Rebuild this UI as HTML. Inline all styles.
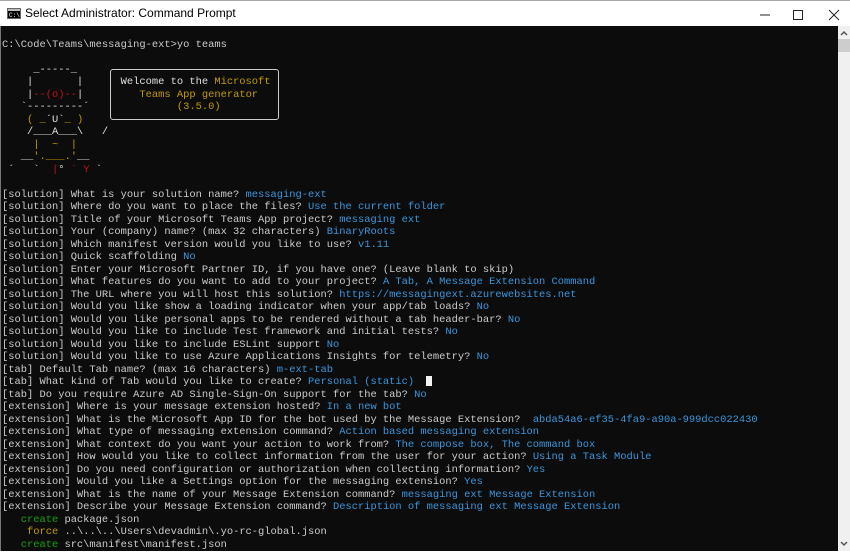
<!DOCTYPE html>
<html><head><meta charset="utf-8"><style>
*{margin:0;padding:0}
body{width:850px;height:551px;overflow:hidden;background:#fff;position:relative;font-family:"Liberation Mono",monospace}
.tb{position:absolute;left:0;top:0;width:850px;height:26px;background:#fff;border-top:1px solid #aaa;box-sizing:border-box}
.tt{position:absolute;left:25px;top:5px;font:12px "Liberation Sans",sans-serif;color:#000}
.con{position:absolute;left:0;top:26px;width:838px;height:525px;background:#0c0c0c;border-left:1px solid #777;box-sizing:border-box}
.sb{position:absolute;left:838px;top:26px;width:12px;height:525px;background:#f0f0f0}
pre{position:absolute;left:2px;top:38.75px;font-family:"Liberation Mono",monospace;font-size:10.42px;line-height:12.5px;color:#cccccc;white-space:pre}
.b{color:#3a96dd}.g{color:#13a10e}.y{color:#c19c00}.r{color:#c50f1f}.w{color:#e0e0e0}
.box{position:absolute;left:110px;top:69px;width:167px;height:49px;border:1.5px solid #ccc;border-radius:3px}
.cur{position:absolute;left:426px;top:376px;width:6px;height:10px;background:#f2f2f2}
</style></head><body>
<div class="tb">
<svg style="position:absolute;left:7px;top:7px" width="14" height="11"><rect x="0.5" y="0.5" width="13" height="10" fill="#000" stroke="#666"/><rect x="1" y="1" width="12" height="2" fill="#bbb"/><text x="2" y="9" font-size="6" fill="#fff" font-family="Liberation Mono">C:\</text></svg>
<div class="tt">Select Administrator: Command Prompt</div>
<svg style="position:absolute;left:755px;top:6px" width="90" height="16">
<line x1="5" y1="8" x2="15" y2="8" stroke="#222" stroke-width="1"/>
<rect x="38.5" y="3.5" width="9" height="9" fill="none" stroke="#222"/>
<line x1="74" y1="3" x2="84" y2="13" stroke="#222"/><line x1="84" y1="3" x2="74" y2="13" stroke="#222"/>
</svg>
</div>
<div class="con"></div>
<div class="sb">
<svg width="12" height="525"><path d="M3 9 L6 6 L9 9" fill="none" stroke="#555" stroke-width="1.5"/><rect x="0" y="13" width="12" height="13" fill="#cdcdcd"/><path d="M3 516 L6 519 L9 516" fill="none" stroke="#555" stroke-width="1.5"/></svg>
</div>
<div class="box"></div>
<div class="cur"></div>
<pre>C:\Code\Teams\messaging-ext&gt;yo teams

<span class="w">     _-----_</span>
<span class="w">    |       |</span>      <span class="w">Welcome to the </span><span class="y">Microsoft</span>
<span class="w">    |</span><span class="r">--(o)--</span><span class="w">|</span>         <span class="y">Teams App generator</span>
<span class="w">   `---------´</span>              <span class="y">(3.5.0)</span>
<span class="y">    ( _</span><span class="w">´U`</span><span class="y">_ )</span>
<span class="w">    /___A___\   /</span>
<span class="y">     |  ~  |</span>
<span class="w">   __</span><span class="y">'.___.'</span><span class="w">__</span>
<span class="w"> ´   `  </span><span class="r">|</span><span class="w">° </span><span class="r">´ Y</span><span class="w"> `</span>

[solution] What is your solution name? <span class="b">messaging-ext</span>
[solution] Where do you want to place the files? <span class="b">Use the current folder</span>
[solution] Title of your Microsoft Teams App project? <span class="b">messaging ext</span>
[solution] Your (company) name? (max 32 characters) <span class="b">BinaryRoots</span>
[solution] Which manifest version would you like to use? <span class="b">v1.11</span>
[solution] Quick scaffolding <span class="b">No</span>
[solution] Enter your Microsoft Partner ID, if you have one? (Leave blank to skip)
[solution] What features do you want to add to your project? <span class="b">A Tab, A Message Extension Command</span>
[solution] The URL where you will host this solution? <span class="b">https://messagingext.azurewebsites.net</span>
[solution] Would you like show a loading indicator when your app/tab loads? <span class="b">No</span>
[solution] Would you like personal apps to be rendered without a tab header-bar? <span class="b">No</span>
[solution] Would you like to include Test framework and initial tests? <span class="b">No</span>
[solution] Would you like to include ESLint support <span class="b">No</span>
[solution] Would you like to use Azure Applications Insights for telemetry? <span class="b">No</span>
[tab] Default Tab name? (max 16 characters) <span class="b">m-ext-tab</span>
[tab] What kind of Tab would you like to create? <span class="b">Personal (static)</span>
[tab] Do you require Azure AD Single-Sign-On support for the tab? <span class="b">No</span>
[extension] Where is your message extension hosted? <span class="b">In a new bot</span>
[extension] What is the Microsoft App ID for the bot used by the Message Extension?  <span class="b">abda54a6-ef35-4fa9-a90a-999dcc022430</span>
[extension] What type of messaging extension command? <span class="b">Action based messaging extension</span>
[extension] What context do you want your action to work from? <span class="b">The compose box, The command box</span>
[extension] How would you like to collect information from the user for your action? <span class="b">Using a Task Module</span>
[extension] Do you need configuration or authorization when collecting information? <span class="b">Yes</span>
[extension] Would you like a Settings option for the messaging extension? <span class="b">Yes</span>
[extension] What is the name of your Message Extension command? <span class="b">messaging ext Message Extension</span>
[extension] Describe your Message Extension command? <span class="b">Description of messaging ext Message Extension</span>
   <span class="g">create</span> package.json
    <span class="y">force</span> ..\..\..\Users\devadmin\.yo-rc-global.json
   <span class="g">create</span> src\manifest\manifest.json
</pre>
</body></html>
